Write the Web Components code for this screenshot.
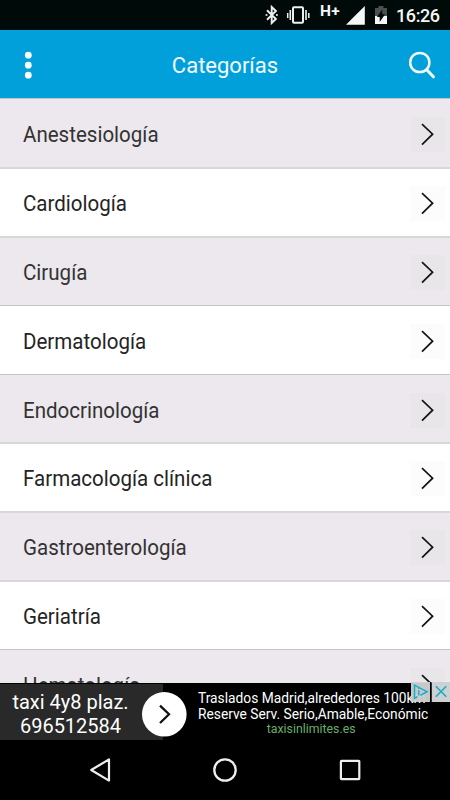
<!DOCTYPE html>
<html lang="es">
<head>
<meta charset="utf-8">
<title>Categorías</title>
<style>
html,body{margin:0;height:100%;overflow:hidden;background:#000}
</style>
</head>
<body>
<app-screen></app-screen>
<script>
const define = (name, html) => {
  const tpl = document.createElement('template');
  tpl.innerHTML = html;
  customElements.define(name, class extends HTMLElement {
    constructor() {
      super();
      this.attachShadow({mode: 'open'}).append(tpl.content.cloneNode(true));
    }
  });
};

define('status-bar', `
<style>
:host{display:flex;justify-content:flex-end;height:30px;background:#000a08;color:#f4f6f5}
svg{display:block;flex:none}
.net{font:700 15.5px/15px Roboto,sans-serif;width:22px;margin:4px 4px 0 10px;letter-spacing:.3px}
.time{font:500 18px/30px Roboto,sans-serif;width:44px;margin:1px 10px 0 8px;white-space:nowrap;letter-spacing:-.4px}
</style>
<svg width="14" height="30" viewBox="265 0 14 30" fill="none" stroke="#eef0ef" stroke-width="1.9"><path d="M267 10.3l8.9 8.7-4.2 4V7l4.2 4-8.9 8.7"/><path d="M265.6 14h1.8v2h-1.8zM276 14h1.8v2H276z" fill="#ccc" stroke="none"/></svg>
<svg width="31" height="30" viewBox="279 0 31 30" fill="none" stroke="#eef0ef"><rect x="293" y="7.3" width="10" height="15.4" rx="1" stroke-width="2"/><path d="M290.3 10v10M306 10v10" stroke-width="1.6"/><path d="M287.7 13v5M308.8 13v5" stroke-width="1.5"/></svg>
<span class="net">H+</span>
<svg width="19" height="30" viewBox="346 0 19 30"><path d="M346 24.7L364.8 6v18.7z" fill="#f6f8f7"/></svg>
<svg width="23" height="30" viewBox="365 0 23 30"><path d="M375 8h3.4V6h5v2h3.6v10h-12z" fill="#4b504e"/><path d="M375 16h12v8h-12z" fill="#f6f8f7"/><path d="M382.3 9.5v4.8h2.8L379.7 22v-5h-2.8z" fill="#000a08"/></svg>
<span class="time">16:26</span>`);

define('title-bar', `
<style>
:host{display:grid;grid-template-columns:56px 1fr 56px;height:68px;background:#01a0db;color:#f3fbff}
h1{margin:0;text-align:center;font:400 22px/71px Roboto,sans-serif;white-space:nowrap}
svg{display:block}
</style>
<svg width="56" height="68" viewBox="0 30 56 68" fill="#fff"><circle cx="28.3" cy="55.2" r="3.4"/><circle cx="28.3" cy="65.2" r="3.4"/><circle cx="28.3" cy="75.2" r="3.4"/></svg>
<h1><slot></slot></h1>
<svg width="56" height="68" viewBox="394 30 56 68" fill="none" stroke="#f5fcff"><circle cx="419.8" cy="62.5" r="9.6" stroke-width="2.5"/><path d="M426.8 69.8l6.6 7" stroke-width="3" stroke-linecap="round"/></svg>`);

define('category-row', `
<style>
:host{display:flex;box-sizing:border-box;height:69px;justify-content:space-between;align-items:flex-start;padding:0 5px 0 23px;background:#fff;border-top:2px solid #d7d7d8;color:#242424;flex:none}
:host([alt]){background:#ece8ed;color:#333}
:host([thin]){border-top:1px solid #c4c3c5;padding-top:1px}
:host([short]){height:68px}
span{font:400 22px/69px Roboto,sans-serif;white-space:nowrap;transform:scaleX(.933);transform-origin:0 0}
svg{display:block;margin-top:17px;background:#fcfcfc}
:host([alt]) svg{background:#e9e6ea}
</style>
<span><slot></slot></span>
<svg width="35" height="35" fill="none" stroke="#141414" stroke-width="1.7"><path d="M12 7.2L22.6 17.2 12 27.6"/></svg>`);

define('ad-banner', `
<style>
:host{display:grid;grid-template-columns:163px 1fr;height:57px;background:#000;color:#fff;position:relative;font-family:Roboto,sans-serif}
.call{background:#292929;font-size:20px;line-height:24px;text-align:center;padding:7px 22px 0 0;height:57px;box-sizing:border-box;border-top:1px solid #000;padding-top:6px;white-space:nowrap}
.text{padding:7px 0 0 35px;font-size:14px;line-height:16px;white-space:nowrap}
.text div{width:230px;transform:scaleX(.984);transform-origin:0 0}
.text .url{color:#69af69;font-size:12.5px;line-height:14px;text-align:center}
.go{position:absolute;left:141px;top:8px}
.info{position:absolute;right:0;top:-1px}
</style>
<div class="call"><div>taxi 4y8 plaz.</div><div>696512584</div></div>
<div class="text"><div>Traslados Madrid,alrededores 100km</div><div>Reserve Serv. Serio,Amable,Económic</div><div class="url">taxisinlimites.es</div></div>
<svg class="go" width="46" height="46"><circle cx="23.3" cy="23.3" r="22.3" fill="#fff"/><path d="M19 14.7l9 8.5-9 8.8" fill="none" stroke="#111" stroke-width="2.3"/></svg>
<svg class="info" width="39" height="20" fill="none" stroke="#16aecb"><path d="M0 0h19v20H0z" fill="#cfd0d1" fill-opacity=".96" stroke="none"/><path d="M20.5 0H39v20H20.5z" fill="#cfd0d1" stroke="none"/><path d="M19 0h1.5v20H19z" fill="#000" stroke="none"/><path d="M6.3 14.6L3.5 16.3V3.2L16 9.7 9.4 13.3" stroke-width="1.5"/><path d="M7.8 8.2v5.3M7.8 5.6v1.4" stroke-width="1.4"/><path d="M24.8 4.3l10.5 10.5M35.3 4.3L24.8 14.8" stroke-width="1.6"/></svg>`);

define('nav-bar', `
<style>:host{display:flex;height:60px;background:#000;justify-content:space-between;padding:0 80px}svg{display:block}</style>
<svg width="40" height="60" viewBox="80 740 40 60" fill="none" stroke="#eee" stroke-width="2.2"><path d="M91.2 770L109 759.4v21.2z" stroke-linejoin="round"/></svg>
<svg width="40" height="60" viewBox="205 740 40 60" fill="none" stroke="#eee" stroke-width="2.3"><circle cx="225" cy="770" r="10.7"/></svg>
<svg width="40" height="60" viewBox="330 740 40 60" fill="none" stroke="#eee" stroke-width="2.2"><rect x="340.9" y="760.8" width="18.4" height="18.4" rx=".6"/></svg>`);

define('app-screen', `
<style>
:host{display:flex;flex-direction:column;width:450px;height:800px;overflow:hidden;background:#000}
main{flex:1;min-height:0;overflow:hidden;display:flex;flex-direction:column}
status-bar,title-bar,ad-banner,nav-bar{flex:none}
</style>
<status-bar></status-bar>
<title-bar>Categorías</title-bar>
<main>
<category-row alt thin>Anestesiología</category-row>
<category-row>Cardiología</category-row>
<category-row alt>Cirugía</category-row>
<category-row thin>Dermatología</category-row>
<category-row alt thin short>Endocrinología</category-row>
<category-row>Farmacología clínica</category-row>
<category-row alt>Gastroenterología</category-row>
<category-row>Geriatría</category-row>
<category-row alt thin>Hematología</category-row>
</main>
<ad-banner></ad-banner>
<nav-bar></nav-bar>`);
</script>
</body>
</html>
